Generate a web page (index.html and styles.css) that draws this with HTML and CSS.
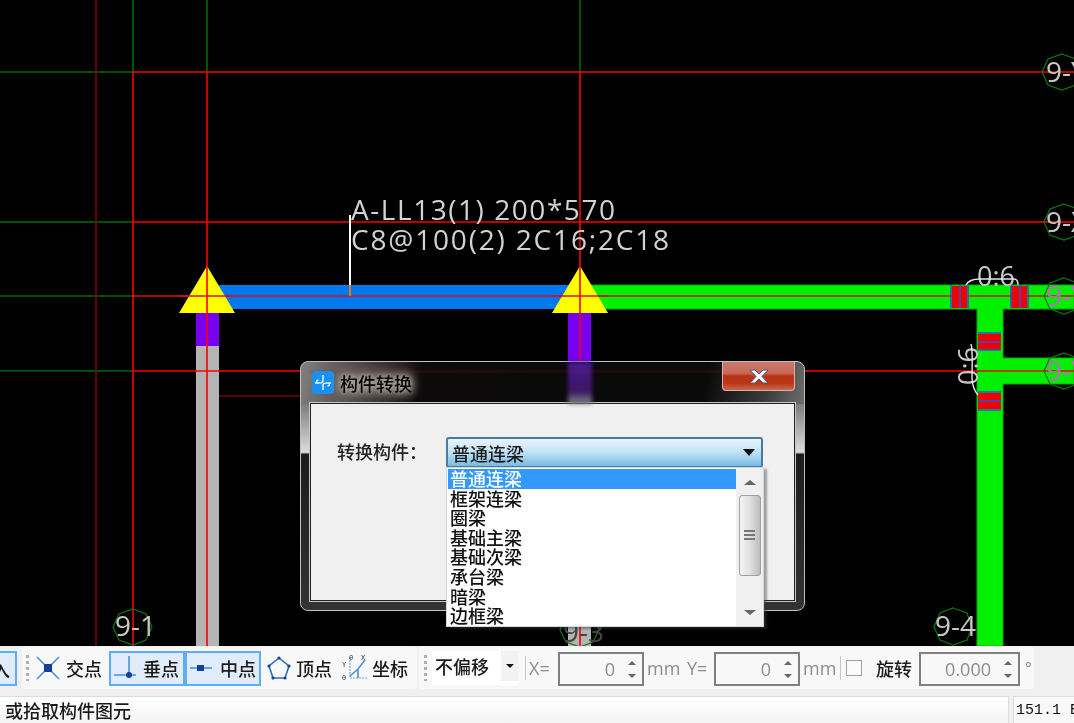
FILE: index.html
```html
<!DOCTYPE html>
<html lang="zh-CN">
<head>
<meta charset="utf-8">
<title>构件转换</title>
<link rel="stylesheet" href="styles.css">
</head>
<body>
<div class="page">
  <svg class="canvas" width="1074" height="646" viewBox="0 0 1074 646">
    <g class="thin dkgreen">
      <path d="M133 0V72M207 0V72M580 0V72M0 72H133M0 222H133M0 296H133M0 371H133"/>
    </g>
    <g class="thin dkred">
      <path d="M96 0V646M207 396H300"/>
    </g>
    <!-- beams -->
    <rect class="blue" x="207" y="285" width="373" height="24"/>
    <path class="green" d="M580 285H1074V309H1003V358H1074V384H1003V646H977V309H580Z"/>
    <rect class="purple" x="196" y="313" width="23" height="33"/>
    <rect class="grey" x="196" y="346" width="23" height="300"/>
    <rect class="purple" x="568" y="313" width="23" height="50"/>
    <rect class="grey" x="568" y="625" width="23" height="21"/>
    <!-- rebar marks -->
    <g class="redfill">
      <rect x="952" y="286" width="15" height="22"/>
      <rect x="1011" y="286" width="16" height="22"/>
      <rect x="978" y="334" width="23" height="16"/>
      <rect x="978" y="393" width="23" height="16"/>
    </g>
    <g class="thin rebar">
      <path d="M951 285V308M960 285V308M968 285V308M1011 285V308M1020 285V308M1028 285V308"/>
      <path d="M978 333H1001M978 342H1001M978 350H1001M978 392H1001M978 401H1001M978 410H1001"/>
    </g>
    <!-- red axes -->
    <g class="thin red">
      <path d="M133 72V646M207 72V646M580 72V646M133 72H1074M133 222H1074M133 371H1074"/>
    </g>
    <path class="thin midred" d="M133 296H1074"/>
    <!-- supports -->
    <path class="yellow" d="M207 266L235 313H179Z"/>
    <path class="yellow" d="M580 266L608 313H552Z"/>
    <path class="thin red" d="M207 266V313M580 266V313"/>
    <path class="thin midred" d="M179 296H235M552 296H608"/>
    <!-- leader -->
    <path class="leader" d="M350 215V285"/>
    <path class="leader-low" d="M350 285V296"/>
    <text class="anno" x="351" y="220" textLength="264">A-LL13(1) 200*570</text>
    <text class="anno" x="351" y="250" textLength="318">C8@100(2) 2C16;2C18</text>
    <!-- axis markers -->
    <g class="hex">
      <path d="M1062 54l14 5 6 13-6 13-14 5-14-5-6-13 6-13z"/>
      <path d="M1064 204l14 5 6 13-6 13-14 5-14-5-6-13 6-13z"/>
      <path d="M1064 278l14 5 6 13-6 13-14 5-14-5-6-13 6-13z"/>
      <path d="M1064 353l14 5 6 13-6 13-14 5-14-5-6-13 6-13z"/>
      <path d="M133 609l13 5 6 13-6 13-13 5-14-5-6-13 6-13z"/>
      <path d="M953 608l14 5 5 14-5 13-14 5-13-5-6-13 6-14z"/>
      <path d="M580 612l13 5 6 13-6 12-13 5-14-5-6-12 6-13z"/>
    </g>
    <text class="axis" x="1046" y="82">9-Y</text>
    <text class="axis" x="1046" y="232">9-X</text>
    <text class="axis pink" x="1046" y="306">9-Y</text>
    <text class="axis pink" x="1046" y="381">9-Y</text>
    <text class="axis" x="115" y="636">9-1</text>
    <text class="axis" x="935" y="636">9-4</text>
    <text class="axis dim" x="563" y="642">9-3</text>
    <!-- 0:6 marks -->
    <text class="mark" x="977" y="286">0:6</text>
    <text class="mark" transform="translate(978 385) rotate(-90)">0:6</text>
    <path class="curve" d="M966 285C968 281 972 279 980 279H1014C1017 279 1018 282 1018 285"/>
    <path class="curve" d="M971 344C973 350 972 370 972 378C972 385 975 392 978 395"/>
  </svg>

  <div class="toolbar">
    <div class="sel-btn sel-clip"><span class="clip-glyph">入</span></div>
    <div class="group group-a">
      <span class="grip"></span>
      <div class="tool tool-a">
        <svg class="ico" width="24" height="28" viewBox="0 0 24 28"><path class="ic-line" d="M1 3L23 25M23 3L1 25"/><rect class="ic-dark" x="8" y="10" width="8" height="8"/></svg>
        <span>交点</span>
      </div>
      <div class="sel-btn tool-b">
        <svg class="ico" width="24" height="28" viewBox="0 0 24 28"><path class="ic-line" d="M1 21H23M16 2V21"/><circle class="ic-dark" cx="16" cy="21" r="3"/></svg>
        <span>垂点</span>
      </div>
      <div class="sel-btn tool-c">
        <svg class="ico" width="24" height="28" viewBox="0 0 24 28"><path class="ic-line" d="M1 14H23"/><rect class="ic-dark" x="8" y="11" width="7" height="6"/></svg>
        <span>中点</span>
      </div>
      <div class="tool tool-d">
        <svg class="ico" width="24" height="28" viewBox="0 0 24 28"><path class="ic-pent" d="M12 4L22 12L18 24H6L2 12Z"/><g class="ic-dark"><circle cx="12" cy="4" r="1.6"/><circle cx="22" cy="12" r="1.6"/><circle cx="18" cy="24" r="1.6"/><circle cx="6" cy="24" r="1.6"/><circle cx="2" cy="12" r="1.6"/></g></svg>
        <span>顶点</span>
      </div>
      <div class="tool tool-e">
        <svg class="ico" width="26" height="28" viewBox="0 0 26 28"><path class="ic-dash" d="M8 3V24H25"/><path class="ic-line" d="M8 22L16 15L23 6M16 15V24"/><text class="ic-txt" x="0" y="13">Y</text><text class="ic-txt" x="7" y="6">0</text><text class="ic-txt" x="19" y="6">X</text><text class="ic-txt" x="0" y="26">0</text></svg>
        <span>坐标</span>
      </div>
    </div>
    <div class="group group-b">
      <span class="grip"></span>
      <div class="combo-small"><span class="combo-text">不偏移</span><span class="combo-arrow"><i class="tri-down"></i></span></div>
      <span class="vsep"></span>
      <span class="gtext lab-x">X=</span>
      <div class="spin spin-n"><span class="spin-val">0</span><span class="spin-btns"><i class="tri-up"></i><i class="tri-down-sm"></i></span></div>
      <span class="gtext unit">mm</span>
      <span class="gtext lab-y">Y=</span>
      <div class="spin spin-n"><span class="spin-val">0</span><span class="spin-btns"><i class="tri-up"></i><i class="tri-down-sm"></i></span></div>
      <span class="gtext unit">mm</span>
      <span class="vsep vsep-b"></span>
      <span class="check"></span>
      <span class="rot">旋转</span>
      <div class="spin spin-w"><span class="spin-val">0.000</span><span class="spin-btns"><i class="tri-up"></i><i class="tri-down-sm"></i></span></div>
      <span class="gtext deg">°</span>
    </div>
  </div>

  <div class="status">
    <div class="status-main">或拾取构件图元</div>
    <div class="status-side">151.1 E</div>
  </div>

  <div class="dialog">
    <span class="glass-col"></span>
    <div class="titlebar">
      <svg class="app-ico" width="22" height="23" viewBox="0 0 22 23"><rect class="app-bg" width="22" height="23" rx="4"/><path class="app-fg" d="M11 4V9.500C11 11 9 12 7 12C4 12 4 9 6.500 9M11 19V14C11 12.500 13 12 15 12C18 12 18 15 15.500 15M3 12H7M15 12H19"/></svg>
      <span class="title">构件转换</span>
      <div class="close"><svg width="20" height="15" viewBox="0 0 20 15"><path class="close-x" d="M1 1H6L10 5L14 1H19L13 7.500L19 14H14L10 10L6 14H1L7 7.500Z"/></svg></div>
    </div>
    <div class="client">
      <div class="form-row">
        <span class="form-label">转换构件：</span>
        <div class="combo"><span>普通连梁</span><i class="tri-combo"></i></div>
      </div>
    </div>
    <div class="droplist">
      <ul class="items">
        <li class="active">普通连梁</li>
        <li>框架连梁</li>
        <li>圈梁</li>
        <li>基础主梁</li>
        <li>基础次梁</li>
        <li>承台梁</li>
        <li>暗梁</li>
        <li>边框梁</li>
      </ul>
      <div class="scroll">
        <i class="sc-up"></i>
        <div class="thumb"><span class="thumb-grip"></span></div>
        <i class="sc-down"></i>
      </div>
    </div>
  </div>
</div>
</body>
</html>
```
FILE: styles.css
```css
* { box-sizing: border-box; }
html, body { margin: 0; padding: 0; background: #000; }
body { font-family: "Noto Sans CJK SC", "Liberation Sans", sans-serif; font-weight: 500; color: #1a1a1a; }
.page { position: relative; width: 1074px; height: 723px; overflow: hidden; display: flex; flex-direction: column; filter: blur(0.35px); }

/* canvas */
.canvas { display: block; flex: none; background: #000; }
.thin { fill: none; stroke-width: 1.6; }
.dkgreen { stroke: #006a00; }
.dkred { stroke: #780000; }
.red { stroke: #f80000; }
.midred { stroke: #d81010; }
.blue { fill: #0078f0; }
.green { fill: #00f000; stroke: #00b000; stroke-width: 1; }
.purple { fill: #7800f0; }
.grey { fill: #b4b4b4; }
.yellow { fill: #ffff00; }
.redfill { fill: #f00000; }
.rebar { stroke: #1e5ae0; stroke-width: 1.6; }
.leader { stroke: #fff; stroke-width: 2; fill: none; }
.leader-low { stroke: #f07810; stroke-width: 2; fill: none; }
.anno { font-family: "Open Sans", "DejaVu Sans", sans-serif; font-size: 28px; font-weight: 400; fill: #d2d2d2; }
.hex { fill: none; stroke: #0a7a0a; stroke-width: 1.2; }
.axis { font-family: "Open Sans", "DejaVu Sans", sans-serif; font-size: 28px; font-weight: 400; fill: #c8c8c8; }
.pink { fill: #b470b8; }
.dim { fill: #444; }
.mark { font-family: "Open Sans", "DejaVu Sans", sans-serif; font-size: 27px; font-weight: 400; fill: #c8c8c8; }
.curve { fill: none; stroke: #e8e8e8; stroke-width: 1.4; }

/* toolbar */
.toolbar { flex: none; height: 50px; background: #f0f0f0; display: flex; align-items: flex-start; padding-top: 5px; overflow: hidden; }
.group { display: flex; align-items: center; height: 42px; background: #f8f8f8; border-radius: 4px; margin-top: -4px; }
.group-a { width: 395px; margin-left: 5px; padding-left: 4px; }
.group-b { width: 615px; margin-left: 2px; padding-left: 5px; }
.grip { flex: none; width: 3px; height: 26px; background: repeating-linear-gradient(180deg, #b0b0b0 0 3px, transparent 3px 6px); }
.sel-btn { flex: none; height: 35px; background: #e0ecf9; border: 2px solid #60acf8; display: flex; align-items: center; font-size: 18px; }
.sel-clip { width: 17px; border-left: 0; overflow: hidden; justify-content: flex-end; padding-right: 5px; }
.clip-glyph { flex: none; }
.tool, .sel-btn span { font-size: 18px; line-height: 24px; white-space: nowrap; }
.tool { display: flex; align-items: center; flex: none; }
.ico { flex: none; display: block; }
.tool-a { margin-left: 7px; width: 67px; gap: 6px; }
.tool-b { width: 76px; margin-left: 6px; padding-left: 2px; gap: 6px; }
.tool-c { width: 76px; margin-left: 0; padding-left: 2px; gap: 7px; }
.tool-d { margin-left: 6px; gap: 5px; }
.tool-e { margin-left: 10px; gap: 4px; }
.ic-line { fill: none; stroke: #4a90dc; stroke-width: 1.6; }
.ic-dark { fill: #12409a; }
.ic-pent { fill: none; stroke: #2a6cc0; stroke-width: 1.6; }
.ic-dash { fill: none; stroke: #6aa4e4; stroke-width: 1.2; stroke-dasharray: 2 1; }
.ic-txt { font-family: "Liberation Mono", monospace; font-size: 7px; font-weight: 400; fill: #333; }
.combo-small { flex: none; width: 86px; height: 34px; margin-left: 5px; background: #fff; display: flex; font-size: 18px; line-height: 30px; }
.combo-text { flex: 1; padding-left: 3px; }
.combo-arrow { flex: none; width: 17px; background: #f2f2f2; display: flex; align-items: center; justify-content: center; height: 30px; }
.tri-down { display: block; width: 0; height: 0; border-left: 4px solid transparent; border-right: 4px solid transparent; border-top: 4px solid #111; }
.tri-combo { display: block; width: 0; height: 0; margin-right: 1px; border-left: 6px solid transparent; border-right: 6px solid transparent; border-top: 7px solid #111; }
.vsep { flex: none; width: 1px; height: 24px; margin-left: 7px; background: #c8c8c8; }
.gtext { flex: none; font-family: "Open Sans", "Liberation Sans", sans-serif; font-size: 18px; font-weight: 400; color: #8c8c8c; line-height: 24px; }
.lab-x { margin-left: 3px; width: 29px; }
.unit { margin-left: 3px; width: 37px; }
.lab-y { margin-left: 3px; width: 27px; }
.spin { flex: none; height: 34px; background: #f8f8f8; border: 2px solid #808080; display: flex; align-items: center; justify-content: flex-end; color: #8c8c8c; font-family: "Open Sans", "Liberation Sans", sans-serif; font-size: 18px; font-weight: 400; margin-top: 2px; }
.spin-n { width: 86px; }
.spin-w { width: 101px; margin-left: 7px; }
.spin-val { line-height: 24px; padding-right: 7px; }
.spin-btns { flex: none; width: 20px; display: flex; flex-direction: column; align-items: center; gap: 9px; }
.tri-up { display: block; width: 0; height: 0; border-left: 4px solid transparent; border-right: 4px solid transparent; border-bottom: 4px solid #666; }
.tri-down-sm { display: block; width: 0; height: 0; border-left: 4px solid transparent; border-right: 4px solid transparent; border-top: 4px solid #666; }
.vsep-b { margin-left: 0; }
.check { flex: none; width: 16px; height: 16px; margin-left: 5px; background: #fbfbfb; border: 1px solid #a0a0a0; }
.rot { flex: none; margin-left: 14px; font-size: 18px; line-height: 24px; }
.deg { margin-left: 5px; font-size: 16px; }

/* status */
.status { flex: 1; display: flex; background: #f0f0f0; font-size: 18px; }
.status-main { flex: none; width: 1009px; padding-left: 5px; line-height: 27px; border-top: 1px solid #dcdcdc; border-right: 1px solid #dcdcdc; background: linear-gradient(180deg, #fff, #f4f4f4); white-space: nowrap; }
.status-side { flex: 1; margin-left: 4px; padding-left: 2px; border-top: 1px solid #dcdcdc; border-left: 1px solid #dcdcdc; background: #f8f8f8; font-family: "Liberation Mono", monospace; font-size: 15px; font-weight: 400; line-height: 27px; white-space: nowrap; overflow: hidden; color: #111; }

/* dialog */
.dialog { position: absolute; left: 300px; top: 361px; width: 505px; height: 250px; border: 1px solid #c0c0c0; border-radius: 8px; padding: 0 9px 9px; display: flex; flex-direction: column;
  background:
    linear-gradient(100deg, #808080 0, #6a6262 6%, #3c3434 16%, #0c0a0a 24%, #0a0a0a 80%, #3a3a3a 92%, #6c6c6c 100%) 0 0 / 100% 42px no-repeat,
    linear-gradient(180deg, #666 0, #777 30px, #7c7c7c 42px, #dcdcdc 90px, #bcbcbc 91px, #1c1c1c 92px, #333 100%) 0 0 / 100% 100% no-repeat,
    #111; }
.glass-col { position: absolute; left: 267px; top: 0; width: 24px; height: 42px; background: linear-gradient(180deg, #4a1a9a, #3a1860 70%, #888 100%); filter: blur(2px); }
.titlebar { position: relative; flex: none; height: 41px; display: flex; align-items: center; padding: 0 0 0 2px; }
.titlebar::before { content: ""; position: absolute; left: 0; right: 0; top: 9px; height: 1px; background: rgba(170,20,20,.4); filter: blur(1px); }
.app-ico { flex: none; position: relative; }
.app-bg { fill: #1990f0; }
.app-fg { fill: none; stroke: #dff2ff; stroke-width: 1.5; }
.title { position: relative; margin-left: 6px; font-size: 18px; line-height: 24px; color: #000; text-shadow: 0 0 5px #b8b0a8, 0 0 8px #b8b0a8, 0 0 12px #b0a8a0, 0 0 16px #a8a098; }
.close { position: relative; flex: none; width: 73px; height: 29px; margin-left: auto; margin-top: -12px; border: 1px solid #d8b0a8; border-top: 0; border-radius: 0 0 4px 4px; background: linear-gradient(180deg, #c87a6c 0, #c8695a 40%, #b83214 50%, #bc3618 76%, #c86850 100%); display: flex; align-items: center; justify-content: center; }
.close-x { fill: #f4f4f8; stroke: #505870; stroke-width: 1; }
.client { flex: 1; background: #f0f0f0; border: 1px solid #202020; outline: 1px solid #c8c8c8; }
.form-row { display: flex; align-items: center; padding: 33px 31px 0 26px; }
.form-label { flex: none; width: 109px; font-size: 18px; line-height: 24px; color: #222; margin-top: -3px; }
.combo { flex: 1; height: 31px; border: 2px solid #4a7a9c; border-radius: 3px; background: linear-gradient(180deg, #e8f4fc 0, #c4e4f6 45%, #78bce2 100%); display: flex; align-items: center; justify-content: space-between; padding: 0 5px 0 4px; font-size: 18px; }
.combo span { line-height: 24px; }
.droplist { position: absolute; left: 145px; top: 105px; width: 318px; height: 160px; background: #fff; border: 1px solid #cfd6e4; display: flex; box-shadow: 3px 2px 2px rgba(60,60,60,.45); }
.items { list-style: none; margin: 0; padding: 1px 0 0 1px; flex: 1; font-size: 18px; line-height: 19.6px; color: #111; }
.items li { padding-left: 2px; height: 19.6px; white-space: nowrap; }
.items .active { background: #3399ff; color: #fff; }
.scroll { flex: none; width: 27px; background: #f0f0f0; display: flex; flex-direction: column; align-items: center; padding: 0 0 1px; }
.sc-up { display: block; margin-top: 12px; width: 0; height: 0; border-left: 6px solid transparent; border-right: 6px solid transparent; border-bottom: 5px solid #666; }
.thumb { margin-top: 10px; width: 22px; height: 81px; border: 1px solid #a0a0a0; border-radius: 3px; background: linear-gradient(90deg, #f4f4f4, #e0e0e0 50%, #bcbcbc); display: flex; align-items: center; justify-content: center; }
.thumb-grip { display: block; width: 11px; height: 12px; background: repeating-linear-gradient(180deg, #777 0 2px, transparent 2px 4px); }
.sc-down { display: block; margin-top: 34px; width: 0; height: 0; border-left: 6px solid transparent; border-right: 6px solid transparent; border-top: 5px solid #666; }
```
